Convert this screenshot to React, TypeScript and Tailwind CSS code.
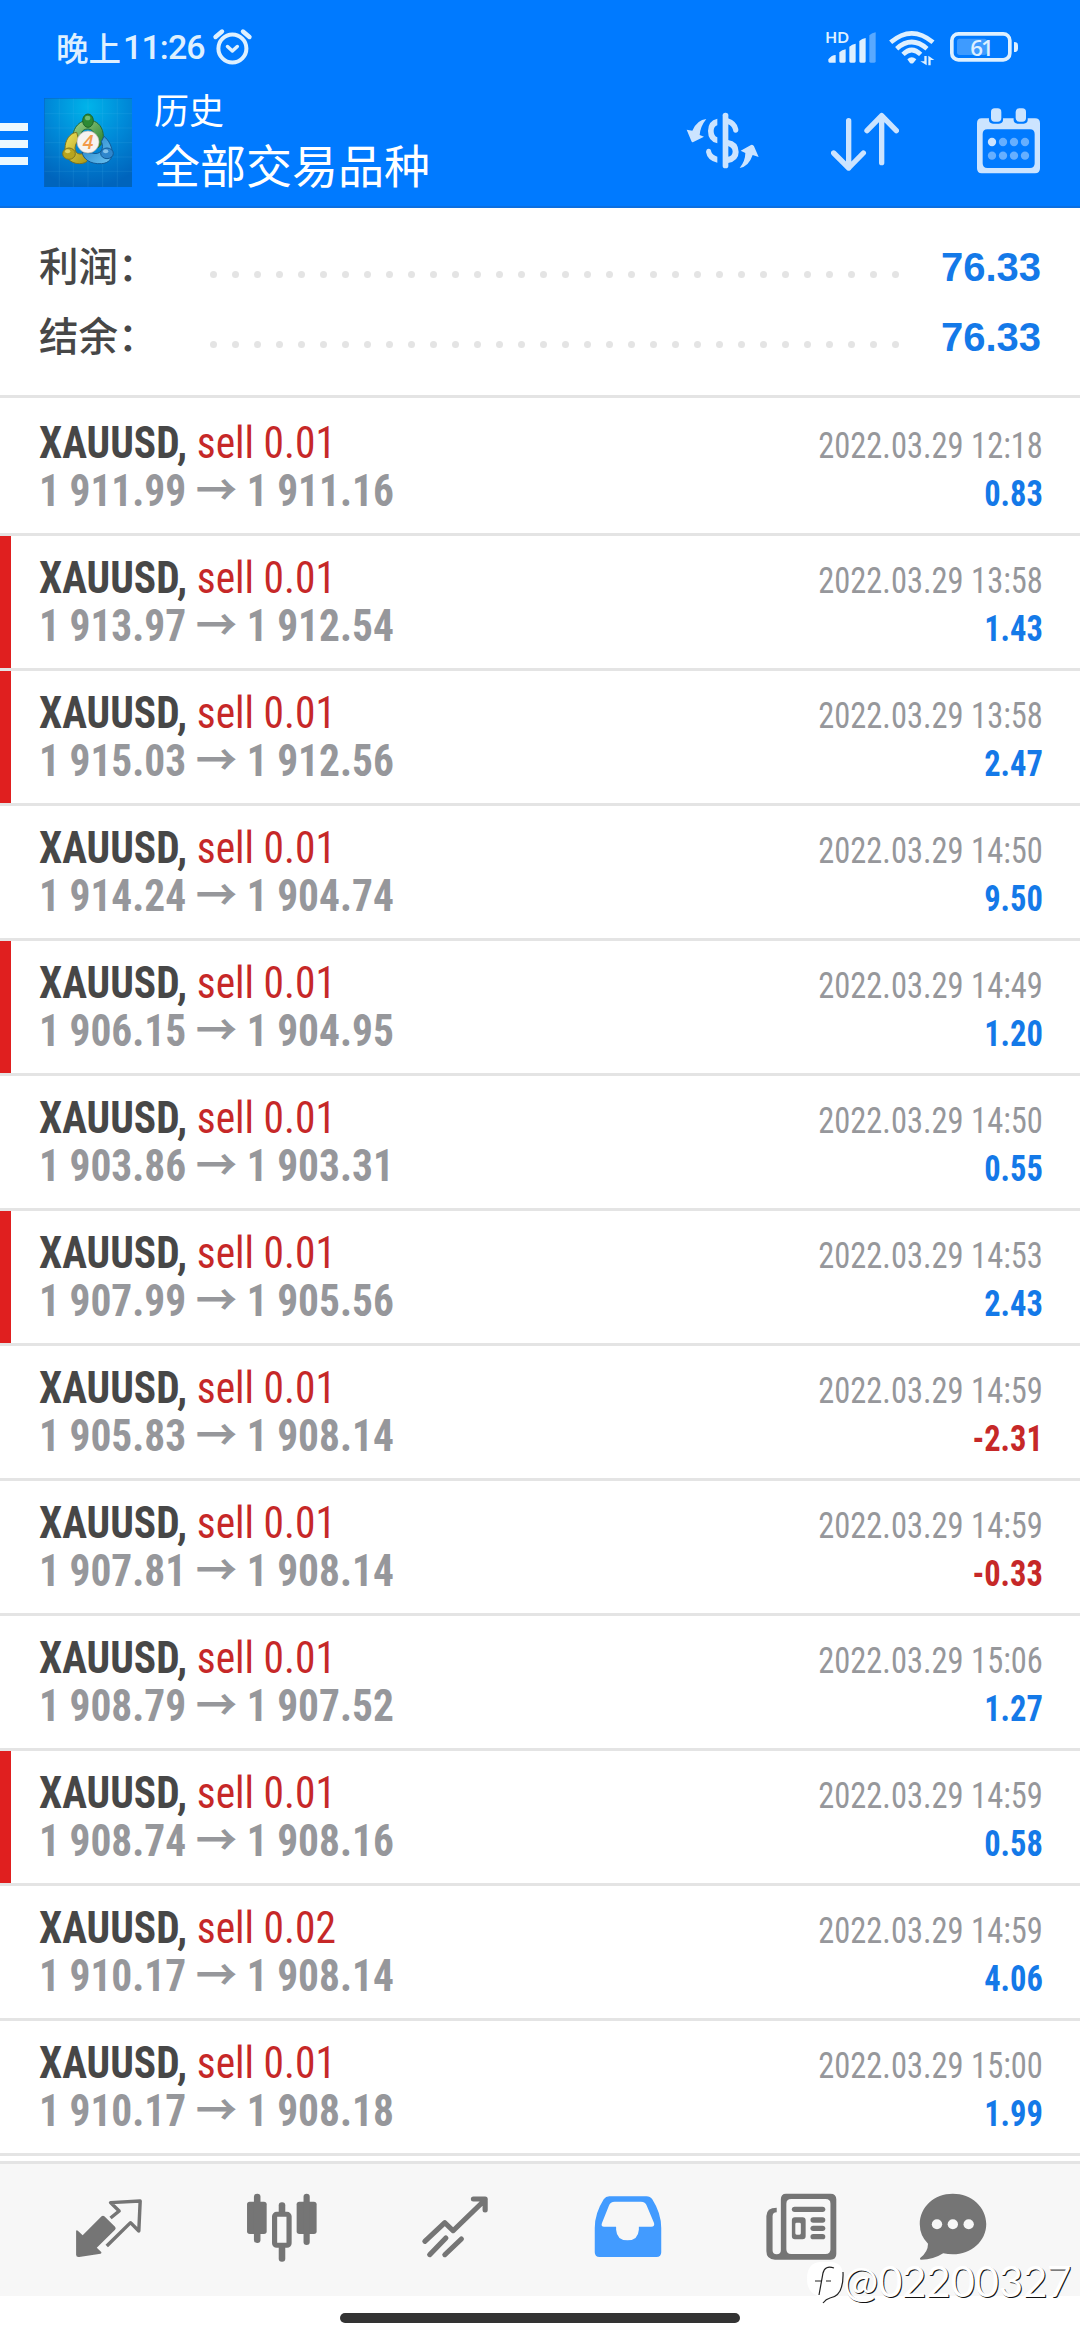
import React from 'react'

type Deal = {
  lot: string
  open: string
  close: string
  time: string
  profit: string
  marked?: boolean
}

const deals: Deal[] = [
  { lot: '0.01', open: '1 911.99', close: '1 911.16', time: '12:18', profit: '0.83' },
  { lot: '0.01', open: '1 913.97', close: '1 912.54', time: '13:58', profit: '1.43', marked: true },
  { lot: '0.01', open: '1 915.03', close: '1 912.56', time: '13:58', profit: '2.47', marked: true },
  { lot: '0.01', open: '1 914.24', close: '1 904.74', time: '14:50', profit: '9.50' },
  { lot: '0.01', open: '1 906.15', close: '1 904.95', time: '14:49', profit: '1.20', marked: true },
  { lot: '0.01', open: '1 903.86', close: '1 903.31', time: '14:50', profit: '0.55' },
  { lot: '0.01', open: '1 907.99', close: '1 905.56', time: '14:53', profit: '2.43', marked: true },
  { lot: '0.01', open: '1 905.83', close: '1 908.14', time: '14:59', profit: '-2.31' },
  { lot: '0.01', open: '1 907.81', close: '1 908.14', time: '14:59', profit: '-0.33' },
  { lot: '0.01', open: '1 908.79', close: '1 907.52', time: '15:06', profit: '1.27' },
  { lot: '0.01', open: '1 908.74', close: '1 908.16', time: '14:59', profit: '0.58', marked: true },
  { lot: '0.02', open: '1 910.17', close: '1 908.14', time: '14:59', profit: '4.06' },
  { lot: '0.01', open: '1 910.17', close: '1 908.18', time: '15:00', profit: '1.99' },
]

const StatusBar = () => (
  <div className="flex h-[93px] items-start justify-between pl-[56px] pr-[61px] pt-[27px] text-[#def0ff]">
    <div className="flex items-center">
      <span className="w-[67px] whitespace-nowrap font-['Noto_Sans_CJK_SC',sans-serif] text-[32.5px] leading-[40px] font-medium">晚上</span>
      <span className="w-[83px] whitespace-nowrap font-[Roboto,sans-serif] text-[34px] leading-[40px] font-medium tracking-[-0.9px]">11:26</span>
      <svg className="ml-[6px]" width="42" height="40" viewBox="212 27 42 40" fill="none" stroke="currentColor" strokeLinecap="round" strokeLinejoin="round">
        <circle cx="232.4" cy="48.5" r="14" strokeWidth="4" />
        <path d="M215.5 37 222 31.5M243 31.5 249.500 37" strokeWidth="4.400" />
        <path d="m227.500 46.500 4.900 4.500 4.900-4.500" strokeWidth="3.500" />
      </svg>
    </div>
    <svg width="194" height="40" viewBox="552 81 582 120" fill="currentColor">
      <text x="553" y="128" fontFamily="Lato, sans-serif" fontSize="46" fontWeight="700">HD</text>
      <path d="M562 178q10-13 22-13v23h-18q-4 0-4-4zM595 157q8-8 19-9v36q0 4-4 4h-11q-4 0-4-4zM625 140q8-8 19-9v53q0 4-4 4h-11q-4 0-4-4zM655 123q8-8 19-9v70q0 4-4 4h-11q-4 0-4-4z" />
      <path opacity=".4" d="M685 106q8-8 19-9v87q0 4-4 4h-11q-4 0-4-4z" />
      <g fill="none" stroke="currentColor" strokeWidth="14">
        <path d="M749 127q63-54 127 0M767 146q45-40 91 0M786 163q26-26 53 0" />
      </g>
      <path d="M799 178q13-13 27 0l-9 11q-5 3-10 0z" />
      <path d="M850 168h7v28l-19-12h12zM862 196v-29l18 13h-11v16z" />
      <rect x="932.500" y="101.500" width="174" height="78" rx="20" fill="none" stroke="currentColor" strokeWidth="11" />
      <rect x="948" y="116" width="90" height="49" rx="8" opacity=".28" />
      <path d="M1119 126q12 0 12 10v10q0 10-12 10z" />
      <text x="988" y="168" fontFamily="'Open Sans', sans-serif" fontSize="67" fontWeight="600" textLength="70">61</text>
    </svg>
  </div>
)

const AppLogo = () => (
  <svg width="88" height="89" viewBox="42 53 264 267">
    <defs>
      <radialGradient id="sky" cx=".5" cy=".1" r=".9">
        <stop offset="0" stopColor="#00b4ea" />
        <stop offset=".5" stopColor="#0089d8" />
        <stop offset="1" stopColor="#0064bc" />
      </radialGradient>
      <linearGradient id="green" x1="0" y1="0" x2="1" y2="1">
        <stop offset="0" stopColor="#a5d58c" />
        <stop offset="1" stopColor="#1f7d2b" />
      </linearGradient>
      <linearGradient id="yellow" x1="0" y1="0" x2="1" y2="1">
        <stop offset="0" stopColor="#efe25c" />
        <stop offset="1" stopColor="#a79414" />
      </linearGradient>
      <linearGradient id="blue" x1="0" y1="0" x2="1" y2="1">
        <stop offset="0" stopColor="#1c7cc4" />
        <stop offset="1" stopColor="#6cc4f2" />
      </linearGradient>
    </defs>
    <rect x="42" y="53" width="264" height="267" fill="url(#sky)" />
    <path d="M88 53v267M130 53v267M174 53v267M218 53v267M262 53v267M42 100h264M42 143h264M42 187h264M42 230h264M42 273h264" stroke="#5fc0f0" strokeOpacity=".2" strokeWidth="2" />
    <path d="M42 54h264M43 53v267" stroke="#0a62c4" strokeWidth="2" />
    <g strokeWidth="3">
      <path d="M128 175c0-72 92-74 92-6 0 16-7 26-16 33l-22-6c14-16 16-50-8-50-20 0-24 16-18 30z" fill="url(#green)" stroke="#2a6a30" />
      <path d="M140 156c-44 4-52 94 8 94 12 0 22-4 28-12l-16-18c-28 8-32-22-14-42z" fill="url(#yellow)" stroke="#7d7420" />
      <path d="M222 168c30 24 38 80-8 82-34 2-54-14-58-34l30 2c26 8 38-14 28-34z" fill="url(#blue)" stroke="#125a96" />
      <ellipse cx="174" cy="121" rx="16" ry="20" fill="#2c8a35" stroke="#1f6428" />
      <ellipse cx="117" cy="220" rx="19" ry="17" fill="#b8a41e" stroke="#7d7420" />
      <ellipse cx="231" cy="219" rx="19" ry="16" fill="#2f86cc" stroke="#125a96" />
    </g>
    <ellipse cx="173" cy="113" rx="8" ry="7" fill="#8fd08c" opacity=".7" />
    <ellipse cx="113" cy="213" rx="8" ry="6" fill="#f1e679" opacity=".7" />
    <ellipse cx="227" cy="213" rx="8" ry="6" fill="#a8dcf8" opacity=".7" />
    <circle cx="174" cy="185" r="33" fill="#f6f3f1" stroke="#b9b3a8" strokeWidth="2" />
    <text x="174" y="206" textAnchor="middle" fontFamily="'Open Sans', sans-serif" fontStyle="italic" fontSize="58" fontWeight="600" fill="#f29a4a">4</text>
  </svg>
)

const Header = () => (
  <header className="h-[208px] border-b-2 border-[#0c6fe0] bg-[#007aff]">
    <StatusBar />
    <div className="flex h-[113px] items-start">
      <div className="mt-[30px] flex w-[28px] flex-col gap-[9px]">
        <div className="h-[8px] bg-[#ebf8ff]" />
        <div className="h-[8px] bg-[#ebf8ff]" />
        <div className="h-[8px] bg-[#ebf8ff]" />
      </div>
      <div className="ml-[16px] mt-[5px]">
        <AppLogo />
      </div>
      <div className="-mt-[2px] ml-[22px] w-[532px] whitespace-nowrap font-['Noto_Sans_CJK_SC',sans-serif] text-white">
        <div className="text-[35px] leading-[36px]">历史</div>
        <div className="mt-[6px] text-[46px] leading-[60px]">全部交易品种</div>
      </div>
      <div className="mt-[14px] flex items-start text-[#cce4ff]">
        {/* currency */}
        <svg className="mt-[5px]" width="74" height="58" viewBox="136 335 222 174" fill="currentColor">
          <path d="M197 356q-27 2-42 35l-17-3 14 34q2 5 6 3l32-16-13-5q2-26 20-48zM297 503q27-4 39-39l18 6-14-32q-3-6-9-4l-31 17 14 7q0 24-17 45z" />
          <path d="M230 355q-28 6-28 37t28 37v-18q-11-4-11-19 0-13 11-17zM196 455q1-10 8-10t8 10q4 10 18 14v18q-30-6-34-32z" />
          <rect x="246" y="337" width="17" height="167" rx="8" />
          <path d="M262 354q27 9 31 32 1 10-7 11t-9-9q-4-12-15-16zM262 419q31 4 32 36 0 27-32 33zM262 437v32q13-2 14-15 0-12-14-17z" fillRule="evenodd" />
        </svg>
        {/* sort */}
        <svg className="ml-[71px] mt-[5px]" width="68" height="60" viewBox="573 335 204 180" fill="none" stroke="currentColor" strokeWidth="16" strokeLinecap="round" strokeLinejoin="round">
          <path d="M626 361v142M581 458l45 45 44-45M725 487V346M681 391l44-45 44 45" />
        </svg>
        {/* calendar */}
        <svg className="ml-[77px] -mt-[1px]" width="66" height="68" viewBox="1008 317 198 204" fill="currentColor">
          <path fillRule="evenodd" d="M1025 354h22q-2 16 12 16h18q14 0 12-16h32q-2 16 12 16h18q14 0 12-16h22q15 0 15 15v135q0 15-15 15h-160q-14 0-14-15V369q0-15 14-15zm17 33q-14 0-14 14v88q0 14 14 14h128q14 0 14-14v-88q0-14-14-14z" />
          <rect x="1053" y="324" width="31" height="40" rx="11" />
          <rect x="1127" y="324" width="31" height="40" rx="11" />
          <circle cx="1056" cy="425" r="12.500" />
          {[[1089, 425], [1122, 425], [1155, 425], [1056, 466], [1089, 466], [1122, 466], [1155, 466]].map(([cx, cy]) => (
            <circle key={`${cx}-${cy}`} cx={cx} cy={cy} r="12.500" opacity=".5" />
          ))}
        </svg>
      </div>
    </div>
  </header>
)

const SummaryRow = ({ label, value }: { label: string; value: string }) => (
  <div className="flex h-[70px] items-start pl-[39px] pr-[39px]">
    <div className="mt-[1px] w-[171px] whitespace-nowrap font-['Noto_Sans_CJK_SC',sans-serif] text-[39.5px] leading-[60px] font-medium text-[#474747]">{label}</div>
    <div className="mt-[38px] flex gap-[15px]">
      {Array.from({ length: 32 }, (_, i) => (
        <div key={i} className="h-[7px] w-[7px] rounded-full bg-[#e4e4e4]" />
      ))}
    </div>
    <div className="ml-auto mt-[4px] font-['Liberation_Sans',sans-serif] text-[40px] leading-[60px] font-bold text-[#1479e8]">{value}</div>
  </div>
)

const DealRow = ({ deal }: { deal: Deal }) => (
  <div className="flex h-[135px] border-b-[3px] border-[#e4e4e4]">
    <div className={deal.marked ? 'w-[11px] bg-[#e01f1f]' : 'w-[11px]'} />
    <div className="flex flex-1 justify-between whitespace-nowrap pl-[28px] pr-[37px] font-['Roboto_Condensed',Roboto,'Noto_Sans_CJK_SC',sans-serif] [font-stretch:75%]">
      <div className="origin-left scale-x-[0.952] pt-[19px] text-[43.5px] leading-[48px]">
        <div className="h-[48px] text-[#c62828]">
          <span className="font-bold text-[#474747]">XAUUSD,</span> sell {deal.lot}
        </div>
        <div className="h-[48px] font-bold text-[#96979b]">
          {deal.open} → {deal.close}
        </div>
      </div>
      <div className="origin-right scale-x-[0.878] pt-[21px] text-right text-[37px] leading-[48px]">
        <div className="h-[48px] text-[#96979b]">2022.03.29 {deal.time}</div>
        <div className={deal.profit.startsWith('-') ? 'h-[48px] font-bold text-[#c62828]' : 'h-[48px] font-bold text-[#1479e8]'}>
          {deal.profit}
        </div>
      </div>
    </div>
  </div>
)

const NavIcon = ({ viewBox, children }: { viewBox: string; children: React.ReactNode }) => (
  <svg width="72" height="72" viewBox={viewBox} preserveAspectRatio="none" fill="currentColor">
    {children}
  </svg>
)

const BottomNav = () => (
  <nav className="mt-[5px] flex h-[135px] items-center border-t-[3px] border-[#e4e4e4] bg-[#f7f7f7] pb-[4px] pl-[22px] text-[#757575]">
    <div className="flex w-[173px] justify-center">
      <NavIcon viewBox="210 187 209 216">
        <path d="M219 303q2-3 5 0l14 14 55-57q4-4 8 0l31 31q4 4 0 9l-53 54 13 13q2 4-2 5l-62 10q-9 1-9-7z" />
        <path d="M319 265l25-21-25-25 86-5-4 90-24-25-69 70" fill="none" stroke="currentColor" strokeWidth="10" strokeLinejoin="round" />
      </NavIcon>
    </div>
    <div className="flex w-[173px] justify-center">
      <NavIcon viewBox="712 187 209 216">
        <rect x="715" y="216" width="57" height="97" rx="8" />
        <rect x="735" y="192" width="19" height="148" rx="9" />
        <rect x="859" y="216" width="58" height="97" rx="8" />
        <rect x="879" y="192" width="18" height="154" rx="9" />
        <rect x="807" y="218" width="19" height="40" rx="9" />
        <rect x="807" y="345" width="19" height="51" rx="9" />
        <rect x="795" y="254" width="42" height="93" rx="6" fill="none" stroke="currentColor" strokeWidth="15" />
      </NavIcon>
    </div>
    <div className="flex w-[173px] justify-center">
      <NavIcon viewBox="1214 187 209 216">
        <path d="M1231 335l58-56 24 24 93-93M1372 208h34v33M1245 375l47-50M1289 375l48-47" fill="none" stroke="currentColor" strokeWidth="15" strokeLinecap="round" strokeLinejoin="round" />
      </NavIcon>
    </div>
    <div className="flex w-[173px] justify-center text-[#429bff]">
      <NavIcon viewBox="150 187 209 216">
        <path fillRule="evenodd" d="M200 200h108q11 0 17 9 26 42 26 86v73q0 14-14 14H172q-14 0-14-14v-73q0-44 26-86 6-9 16-9zm16 16q-13 0-17 12l-20 52q-4 11 6 11h35v9q2 32 33 32t33-32v-9h36q11 0 8-11l-21-52q-4-12-17-12z" />
      </NavIcon>
    </div>
    <div className="flex w-[173px] justify-center">
      <NavIcon viewBox="652 187 209 216">
        <path fillRule="evenodd" d="M713 192h129q17 0 17 17v164q0 17-17 17h-161q-25 0-25-25V259q0-25 30-25v14q-12 0-12 12v102q0 12 12 12t12-12V209q0-17 15-17zm15 16q-14 0-14 14v137q0 14 14 14h100q14 0 14-14V222q0-14-14-14z" />
        <rect x="730" y="231" width="97" height="16" rx="8" />
        <path fillRule="evenodd" d="M739 263h22q9 0 9 9v48q0 9-9 9h-22q-9 0-9-9v-48q0-9 9-9zm5 16q-4 0-4 4v28q0 4 4 4h8q4 0 4-4v-28q0-4-4-4z" />
        <rect x="784" y="263" width="43" height="16" rx="8" />
        <rect x="784" y="288" width="43" height="16" rx="8" />
        <rect x="784" y="313" width="43" height="16" rx="8" />
      </NavIcon>
    </div>
    <div className="flex w-[132px] justify-center">
      <NavIcon viewBox="1095 187 209 216">
        <path d="M1199 192c54 0 97 40 97 91s-43 91-97 91q-14 0-28-3-28 19-64 19-6-2-2-6 22-18 22-42-24-24-24-59c0-51 42-91 96-91z" />
        <g fill="#f7f7f7">
          <circle cx="1153" cy="284" r="15" />
          <circle cx="1199" cy="284" r="15" />
          <circle cx="1245" cy="284" r="15" />
        </g>
      </NavIcon>
    </div>
  </nav>
)

const Watermark = () => (
  <div className="absolute top-[2257px] left-[806px] flex items-center text-white">
    <svg width="40" height="48" viewBox="0 0 40 48">
      <path d="M14 5h10q13 0 13 14 0 17-13 21-5 1-7 6l-1-6Q1 38 1 22 1 6 14 5z" fill="#fff" />
      <path d="M28 11q-9-3-11 5l-4 22M9 24h7M20 24h5M37 15q1 24-13 26-4 1-7 5" fill="none" stroke="#222" strokeWidth="1.200" />
    </svg>
    <span className="-ml-[3px] whitespace-nowrap font-[Lato,sans-serif] text-[42px] leading-[46px] tracking-[-0.2px] [text-shadow:1px_1px_0_#111]">@02200327</span>
  </div>
)

const App = () => {
  return (
    <div className="relative h-[2340px] w-[1080px] overflow-hidden bg-white">
      <Header />
      <section className="h-[190px] border-b-[3px] border-[#e4e4e4] pt-[25px]">
        <SummaryRow label="利润：" value="76.33" />
        <SummaryRow label="结余：" value="76.33" />
      </section>
      <main className="pt-[3px]">
        {deals.map((deal, i) => (
          <DealRow key={i} deal={deal} />
        ))}
      </main>
      <BottomNav />
      <div className="mx-auto mt-[17px] h-[10px] w-[400px] rounded-full bg-[#333]" />
      <Watermark />
    </div>
  )
}

export default App
